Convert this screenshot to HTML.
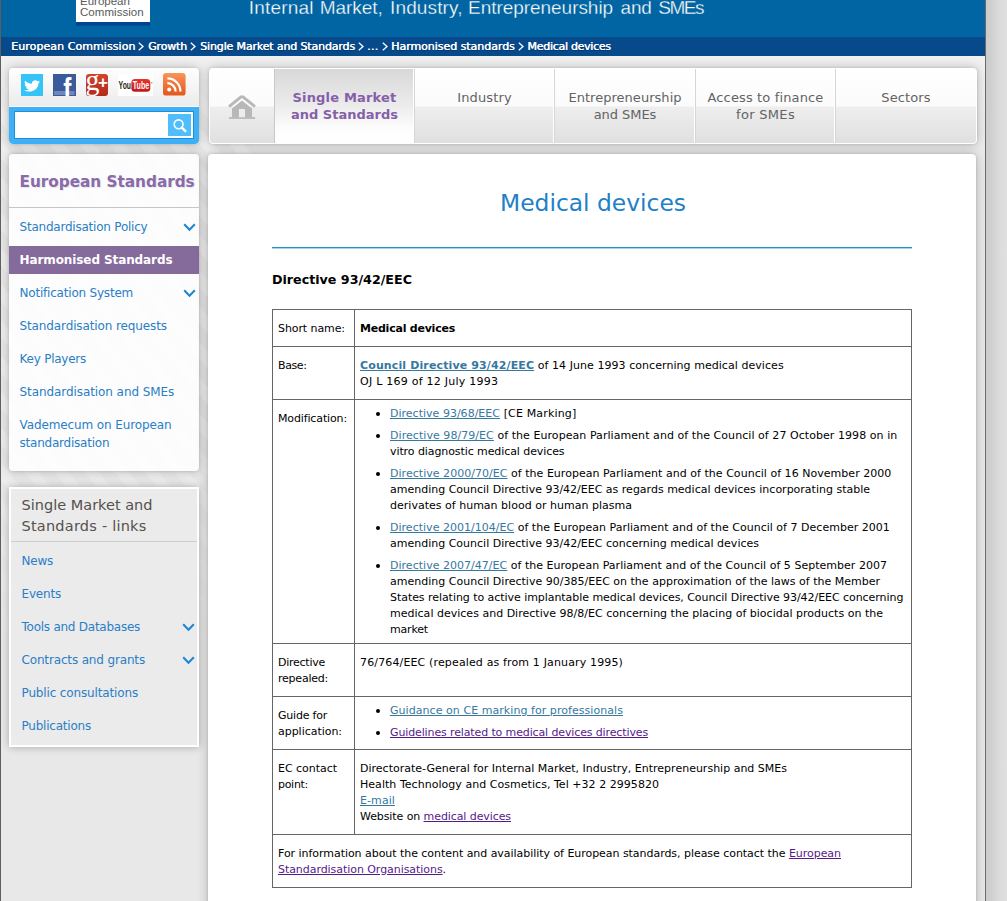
<!DOCTYPE html>
<html lang="en">
<head>
<meta charset="utf-8">
<title>Medical devices - European Commission</title>
<style>
*{box-sizing:border-box;margin:0;padding:0}
html,body{width:1007px;height:901px;overflow:hidden}
body{font-family:"DejaVu Sans","Liberation Sans",sans-serif;font-size:11px;line-height:16px;color:#000;background:#e0e0e0;position:relative}
a{color:#36789f;text-decoration:underline}
a.v{color:#551a8b}
.ln{white-space:nowrap}
.abs,.abs>*{position:absolute}
#gutter{position:absolute;left:986px;top:0;width:21px;height:901px;background:linear-gradient(90deg,#cbcbcb 0,#cecece 4px,#dbdbdb 13px,#e0e0e0 21px)}
#page{position:absolute;left:0;top:0;width:986px;height:901px;background:#e8e8e8;overflow:hidden}
#edgeL{position:absolute;left:0;top:0;width:1px;height:901px;background:#5e5e5e;z-index:9}
#edgeR{position:absolute;left:985px;top:0;width:1px;height:901px;background:#6a6a6a;z-index:9}
#topshade{position:absolute;left:0;top:56px;width:985px;height:120px;background:linear-gradient(#f1f1f1,rgba(241,241,241,0))}
#stripes{position:absolute;left:0;top:70px;width:260px;height:606px;
 background:repeating-linear-gradient(50deg,rgba(255,255,255,0) 0,rgba(255,255,255,0) 11px,rgba(255,255,255,.3) 12px,rgba(255,255,255,.3) 22px,rgba(255,255,255,0) 23px);
 -webkit-mask-image:linear-gradient(transparent 0,#000 6%,#000 55%,transparent 100%);mask-image:linear-gradient(transparent 0,#000 6%,#000 55%,transparent 100%)}
#hdr{position:absolute;left:0;top:0;width:985px;height:37px;background:#0065a2}
#logo{position:absolute;left:76px;top:0;width:74px;height:22px;background:#fff;box-shadow:0 3.7px 0 #004494;color:#58595b;font-family:"Liberation Sans",sans-serif;font-size:11.5px;line-height:11px;white-space:nowrap}
#logo>span{position:absolute;left:4px}
#sitename{position:absolute;left:248.5px;top:-5.5px;color:#fff;-webkit-text-stroke:.3px #0065a2;font-family:"Liberation Sans",sans-serif;font-size:19px;line-height:26px;white-space:nowrap}
#sitename>span{position:absolute;top:0}
#bc{position:absolute;left:0;top:37px;width:985px;height:19px;background:#074a8b;color:#fff;font-size:11px;line-height:19px;white-space:nowrap;text-shadow:.45px 0 0 #fff,0 1px 1px rgba(0,20,60,.45)}
#bc>span{position:absolute;top:0}
#bc svg{position:absolute;top:5px;width:6px;height:9px}
.box{position:absolute;background:#fff;border-radius:4px;box-shadow:0 0 3px rgba(0,0,0,.16),0 0 12px rgba(0,0,0,.22)}
#social{left:9px;top:68px;width:190px;height:76px;background:linear-gradient(#fefefe 0,#f8f8f8 14px,#efefef 30px,#ececec 38px);overflow:hidden}
#social svg{position:absolute}
#sbar{position:absolute;left:0;top:39px;width:190px;height:37px;background:#3eb1f6;box-shadow:0 -1px 0 #fff;border-radius:0 0 4px 4px}
#sinp{position:absolute;left:5px;top:4px;width:180px;height:28px;background:#fff;border:1px solid #1d8fde}
#sbtn{position:absolute;left:159px;top:7px;width:23px;height:22px;background:#50bdfc}
#nav{left:209px;top:68px;width:768px;height:76px;border:1px solid #fff;background:linear-gradient(#fff 0,#fbfbfb 37px,#eeeeee 38px,#e0e0e0 100%);overflow:hidden}
.tab{position:absolute;top:0;height:74px;text-align:center;font-size:13px;line-height:17px;color:#636363;padding-top:20px;border-left:1px solid #d6d6d6;box-shadow:-1px 0 0 #fff}
.tab.act{background:linear-gradient(#d8d8d8 0,#ececec 37px,#fdfdfd 60px,#fff 74px);color:#8560a8;font-weight:bold;border-left:1px solid #c8c8c8;box-shadow:none}
#main{left:208px;top:154px;width:768px;height:800px}
h1{position:absolute;left:1px;width:768px;top:31px;text-align:center;font-weight:normal;color:#2180c8;font-size:23.4px;line-height:36px}
#hr{position:absolute;left:64px;top:93px;width:640px;height:1px;background:#2a8bd5;box-shadow:0 1px 0 #a9d0ee}
h2{position:absolute;left:64px;top:117px;font-size:12.7px;line-height:18px;font-weight:bold;white-space:nowrap}
table{position:absolute;left:64px;top:155px;width:640px;border-collapse:collapse;font-size:11px;line-height:16px}
td{border:1px solid #666;vertical-align:top;padding:11px 5px 9px 5px}
td.l{width:82px}
td ul{list-style:none;margin:-5px 0 -10px 30px}
td li{position:relative;margin-bottom:6px}
td li:before{content:"";position:absolute;left:-14px;top:6px;width:4px;height:4px;border-radius:2px;background:#000}
.side{left:9px;width:190px}
#s1{top:154px;height:317px;background:rgba(255,255,255,.86)}
#s1 h3{position:absolute;left:10.5px;top:16px;font-size:15.3px;line-height:24px;color:#8a6aa7;font-weight:bold;white-space:nowrap;text-shadow:1px 1px 0 rgba(200,205,225,.45)}
#s1 .sep{position:absolute;left:0;top:53px;width:190px;height:1px;background:#c6c6c6}
.mi{position:absolute;left:10.5px;font-size:12px;line-height:18px;color:#2a7ec6;white-space:nowrap}
.mi.cur{left:0;width:190px;height:28px;background:#856a9c;color:#fff;font-weight:bold;padding:5px 0 0 10.5px}
.chev{position:absolute;width:13px;height:9px}
#s2{top:487px;height:260px;background:#ebebeb;border:2px solid #fff;border-radius:0;box-shadow:0 0 8px rgba(0,0,0,.28)}
#s2 h3{position:absolute;left:10.5px;top:6px;font-size:14.5px;line-height:21px;font-weight:normal;color:#55504d;white-space:nowrap}
#s2 .sep{position:absolute;left:0;top:52px;width:186px;height:1px;background:#cdcdcd}
#s2 .mi{left:10.5px}
</style>
</head>
<body>
<div id="gutter"></div>
<div id="page">
<div id="topshade"></div>
<div id="stripes"></div>
<div id="hdr">
 <div id="logo"><span style="top:-4.5px">European</span><span style="top:6.5px"><span class="ln" style="letter-spacing:0.043px">Commission</span></span></div>
 <div id="sitename"><span style="left:0.2px"><span class="ln" style="letter-spacing:0.203px">Internal</span></span> <span style="left:71.2px"><span class="ln" style="letter-spacing:-0.051px">Market,</span></span> <span style="left:141.6px"><span class="ln" style="letter-spacing:0.115px">Industry,</span></span> <span style="left:219.6px"><span class="ln" style="letter-spacing:-0.048px">Entrepreneurship</span></span> <span style="left:372.1px"><span class="ln" style="letter-spacing:-0.234px">and</span></span> <span style="left:409.8px"><span class="ln" style="letter-spacing:-1.472px">SMEs</span></span></div>
</div>
<div id="bc">
 <span style="left:11px"><span class="ln" style="letter-spacing:0.068px">European Commission</span></span>
 <svg style="left:138px" viewBox="0 0 6 9"><path d="M.8.8 5 4.5.8 8.2" fill="none" stroke="#fff" stroke-width="1.3"/></svg>
 <span style="left:148px"><span class="ln" style="letter-spacing:-0.171px">Growth</span></span>
 <svg style="left:190px" viewBox="0 0 6 9"><path d="M.8.8 5 4.5.8 8.2" fill="none" stroke="#fff" stroke-width="1.3"/></svg>
 <span style="left:200px"><span class="ln" style="letter-spacing:-0.141px">Single Market and Standards</span></span>
 <svg style="left:357.5px" viewBox="0 0 6 9"><path d="M.8.8 5 4.5.8 8.2" fill="none" stroke="#fff" stroke-width="1.3"/></svg>
 <span style="left:367px"><span class="ln" style="letter-spacing:0.300px">...</span></span>
 <svg style="left:381.5px" viewBox="0 0 6 9"><path d="M.8.8 5 4.5.8 8.2" fill="none" stroke="#fff" stroke-width="1.3"/></svg>
 <span style="left:391px"><span class="ln" style="letter-spacing:-0.036px">Harmonised standards</span></span>
 <svg style="left:517.5px" viewBox="0 0 6 9"><path d="M.8.8 5 4.5.8 8.2" fill="none" stroke="#fff" stroke-width="1.3"/></svg>
 <span style="left:527.3px"><span class="ln" style="letter-spacing:-0.281px">Medical devices</span></span>
</div>

<div id="social" class="box">
 <!--ICONS-START--><svg style="left:12px;top:6px" width="22" height="22" viewBox="0 0 22 22"><rect width="22" height="22" fill="#35c4f8"/><path transform="translate(3,5) scale(0.67,0.58)" fill="#fff" d="M23.953 4.57a10 10 0 01-2.825.775 4.958 4.958 0 002.163-2.723c-.951.555-2.005.959-3.127 1.184a4.92 4.92 0 00-8.384 4.482C7.69 8.095 4.067 6.13 1.64 3.162a4.822 4.822 0 00-.666 2.475c0 1.71.87 3.213 2.188 4.096a4.904 4.904 0 01-2.228-.616v.06a4.923 4.923 0 003.946 4.827 4.996 4.996 0 01-2.212.085 4.936 4.936 0 004.604 3.417 9.867 9.867 0 01-6.102 2.105c-.39 0-.779-.023-1.17-.067a13.995 13.995 0 007.557 2.209c9.053 0 13.998-7.496 13.998-13.985 0-.21 0-.42-.015-.63A9.935 9.935 0 0024 4.59z"/></svg>
 <svg style="left:44px;top:6px" width="23" height="22" viewBox="0 0 23 22"><rect width="23" height="22" fill="#3b5a9a"/><rect x="1" y="17" width="20.5" height="4" fill="#6f86b7"/><text transform="translate(10.2,25.2) scale(.84,1)" font-family="Liberation Sans,sans-serif" font-weight="bold" font-size="29" fill="#fff">f</text></svg>
 <svg style="left:77px;top:6px" width="22" height="22" viewBox="0 0 22 22"><defs><linearGradient id="gp" x1="0" y1="0" x2="0" y2="1"><stop offset="0" stop-color="#d3432f"/><stop offset="1" stop-color="#b3291c"/></linearGradient></defs><rect width="22" height="22" rx="3" fill="url(#gp)"/><text transform="translate(-0.5,16.4) scale(1.16,1.22)" font-family="Liberation Serif,serif" font-size="24" fill="#fff">g</text><text x="11.9" y="13.6" font-family="Liberation Sans,sans-serif" font-weight="bold" font-size="17" fill="#fff">+</text></svg>
 <svg style="left:109px;top:6px" width="35" height="22" viewBox="0 0 35 22"><defs><linearGradient id="yt" x1="0" y1="0" x2="0" y2="1"><stop offset="0" stop-color="#e8352b"/><stop offset="1" stop-color="#c3151a"/></linearGradient></defs><rect width="35" height="22" fill="#fff"/><rect x="13.4" y="5" width="18.9" height="12.8" rx="3.6" fill="url(#yt)"/><text x="0.6" y="15.2" font-family="Liberation Sans,sans-serif" font-weight="bold" font-size="11" fill="#222" textLength="12.4" lengthAdjust="spacingAndGlyphs">You</text><text x="14.8" y="15.2" font-family="Liberation Sans,sans-serif" font-weight="bold" font-size="11" fill="#fff" textLength="16.4" lengthAdjust="spacingAndGlyphs">Tube</text><rect x="33.1" y="8.4" width="1.3" height=".9" fill="#666"/></svg>
 <svg style="left:154px;top:5px" width="23" height="23" viewBox="0 0 23 23"><defs><linearGradient id="rs" x1="0" y1="0" x2="0" y2="1"><stop offset="0" stop-color="#f8955a"/><stop offset="1" stop-color="#e2571b"/></linearGradient></defs><rect width="22.6" height="22.6" rx="3.2" fill="url(#rs)"/><circle cx="6.2" cy="16.4" r="2" fill="#fff"/><path d="M4.4 10.2a8.2 8.2 0 0 1 8.2 8.2" fill="none" stroke="#fff" stroke-width="2.2"/><path d="M4.4 5.4a13 13 0 0 1 13 13" fill="none" stroke="#fff" stroke-width="2.2"/></svg>
<!--ICONS-END-->
 <div id="sbar"><div id="sinp"></div><div id="sbtn"><svg style="left:4px;top:4px" width="16" height="16" viewBox="0 0 16 16"><circle cx="6.6" cy="6.3" r="4.4" fill="none" stroke="#fff" stroke-width="1.6"/><path d="M9.8 9.6 13.4 13.2" stroke="#fff" stroke-width="2.4" stroke-linecap="round"/></svg></div></div>
</div>

<div id="nav" class="box">
 <div class="tab" style="left:0;width:64px;border-left:0;box-shadow:none"><svg style="position:absolute;left:17px;top:25px" width="30" height="26" viewBox="0 0 30 26"><path d="M15 2.2 2 12.6" stroke="#b8b8b8" stroke-width="3" fill="none"/><path d="M15 2.2 28 12.6" stroke="#b8b8b8" stroke-width="3" fill="none"/><path d="M15 6.6 25 14.4V23.2H5V14.4Z" fill="#b8b8b8"/><rect x="2" y="23.1" width="26" height="1.8" fill="#b8b8b8"/><rect x="11.9" y="15" width="6.1" height="8.2" fill="#ededed"/></svg></div>
 <div class="tab act" style="left:64px;width:140px"><span class="ln" style="letter-spacing:0.181px">Single Market</span><br><span class="ln" style="letter-spacing:0.000px">and Standards</span></div>
 <div class="tab" style="left:204px;width:140px"><span class="ln" style="letter-spacing:0.127px">Industry</span></div>
 <div class="tab" style="left:344px;width:141px"><span class="ln" style="letter-spacing:0.036px">Entrepreneurship</span><br><span class="ln" style="letter-spacing:-0.056px">and SMEs</span></div>
 <div class="tab" style="left:485px;width:140px"><span class="ln" style="letter-spacing:0.141px">Access to finance</span><br><span class="ln" style="letter-spacing:0.316px">for SMEs</span></div>
 <div class="tab" style="left:625px;width:141px"><span class="ln" style="letter-spacing:0.132px">Sectors</span></div>
</div>

<div id="s1" class="box side">
 <h3><span class="ln" style="letter-spacing:-0.026px">European Standards</span></h3>
 <div class="sep"></div>
 <div class="mi" style="top:64px"><span class="ln" style="letter-spacing:-0.221px">Standardisation Policy</span></div>
 <svg class="chev" style="left:174px;top:69px" viewBox="0 0 13 9"><path d="M1.2 1.2 6.5 6.8 11.8 1.2" fill="none" stroke="#1c86d1" stroke-width="2"/></svg>
 <div class="mi cur" style="top:92px"><span class="ln" style="letter-spacing:-0.094px">Harmonised Standards</span></div>
 <div class="mi" style="top:130px"><span class="ln" style="letter-spacing:-0.201px">Notification System</span></div>
 <svg class="chev" style="left:174px;top:135px" viewBox="0 0 13 9"><path d="M1.2 1.2 6.5 6.8 11.8 1.2" fill="none" stroke="#1c86d1" stroke-width="2"/></svg>
 <div class="mi" style="top:163px"><span class="ln" style="letter-spacing:-0.117px">Standardisation requests</span></div>
 <div class="mi" style="top:196px"><span class="ln" style="letter-spacing:-0.234px">Key Players</span></div>
 <div class="mi" style="top:229px"><span class="ln" style="letter-spacing:-0.076px">Standardisation and SMEs</span></div>
 <div class="mi" style="top:262px"><span class="ln" style="letter-spacing:-0.112px">Vademecum on European</span><br><span class="ln" style="letter-spacing:-0.224px">standardisation</span></div>
</div>

<div id="s2" class="box side">
 <h3><span class="ln" style="letter-spacing:0.005px">Single Market and</span><br><span class="ln" style="letter-spacing:0.225px">Standards - links</span></h3>
 <div class="sep"></div>
 <div class="mi" style="top:63px"><span class="ln" style="letter-spacing:-0.209px">News</span></div>
 <div class="mi" style="top:96px"><span class="ln" style="letter-spacing:-0.190px">Events</span></div>
 <div class="mi" style="top:129px"><span class="ln" style="letter-spacing:-0.246px">Tools and Databases</span></div>
 <svg class="chev" style="left:170.6px;top:134px" viewBox="0 0 13 9"><path d="M1.2 1.2 6.5 6.8 11.8 1.2" fill="none" stroke="#1c86d1" stroke-width="2"/></svg>
 <div class="mi" style="top:162px"><span class="ln" style="letter-spacing:-0.152px">Contracts and grants</span></div>
 <svg class="chev" style="left:170.6px;top:167px" viewBox="0 0 13 9"><path d="M1.2 1.2 6.5 6.8 11.8 1.2" fill="none" stroke="#1c86d1" stroke-width="2"/></svg>
 <div class="mi" style="top:195px"><span class="ln" style="letter-spacing:-0.139px">Public consultations</span></div>
 <div class="mi" style="top:228px"><span class="ln" style="letter-spacing:-0.217px">Publications</span></div>
</div>

<div id="main" class="box">
 <h1><span class="ln" style="letter-spacing:-0.005px">Medical devices</span></h1>
 <div id="hr"></div>
 <h2><span class="ln" style="letter-spacing:-0.011px">Directive 93/42/EEC</span></h2>
 <table>
  <tr><td class="l"><span class="ln" style="letter-spacing:-0.084px">Short name:</span></td><td><b><span class="ln" style="letter-spacing:-0.227px">Medical devices</span></b></td></tr>
  <tr><td class="l"><span class="ln" style="letter-spacing:-0.400px">Base:</span></td><td><span class="ln" style="letter-spacing:0.128px"><a href="#"><b>Council Directive 93/42/EEC</b></a></span><span class="ln" style="letter-spacing:0.055px"> of 14 June 1993 concerning medical devices</span><br><span class="ln" style="letter-spacing:0.246px">OJ L 169 of 12 July 1993</span></td></tr>
  <tr><td class="l"><span class="ln" style="letter-spacing:-0.136px">Modification:</span></td><td>
   <ul>
    <li><span class="ln" style="letter-spacing:0.012px"><a href="#">Directive 93/68/EEC</a></span><span class="ln" style="letter-spacing:0.158px"> [CE Marking]</span></li>
    <li><span class="ln" style="letter-spacing:0.059px"><a href="#">Directive 98/79/EC</a> of the European Parliament and of the Council of 27 October 1998 on in</span><br><span class="ln" style="letter-spacing:-0.085px">vitro diagnostic medical devices</span></li>
    <li><span class="ln" style="letter-spacing:0.033px"><a href="#">Directive 2000/70/EC</a> of the European Parliament and of the Council of 16 November 2000</span><br><span class="ln" style="letter-spacing:-0.002px">amending Council Directive 93/42/EEC as regards medical devices incorporating stable</span><br><span class="ln" style="letter-spacing:0.014px">derivates of human blood or human plasma</span></li>
    <li><span class="ln" style="letter-spacing:0.017px"><a href="#">Directive 2001/104/EC</a> of the European Parliament and of the Council of 7 December 2001</span><br><span class="ln" style="letter-spacing:-0.001px">amending Council Directive 93/42/EEC concerning medical devices</span></li>
    <li><span class="ln" style="letter-spacing:0.022px"><a href="#">Directive 2007/47/EC</a> of the European Parliament and of the Council of 5 September 2007</span><br><span class="ln" style="letter-spacing:0.010px">amending Council Directive 90/385/EEC on the approximation of the laws of the Member</span><br><span class="ln" style="letter-spacing:-0.052px">States relating to active implantable medical devices, Council Directive 93/42/EEC concerning</span><br><span class="ln" style="letter-spacing:0.011px">medical devices and Directive 98/8/EC concerning the placing of biocidal products on the</span><br><span class="ln" style="letter-spacing:-0.174px">market</span></li>
   </ul></td></tr>
  <tr><td class="l"><span class="ln" style="letter-spacing:-0.253px">Directive</span><br><span class="ln" style="letter-spacing:-0.229px">repealed:</span></td><td><span class="ln" style="letter-spacing:0.144px">76/764/EEC (repealed as from 1 January 1995)</span></td></tr>
  <tr><td class="l"><span class="ln" style="letter-spacing:-0.215px">Guide for</span><br><span class="ln" style="letter-spacing:-0.033px">application:</span></td><td>
   <ul>
    <li><span class="ln" style="letter-spacing:0.056px"><a href="#">Guidance on CE marking for professionals</a></span></li>
    <li><span class="ln" style="letter-spacing:-0.126px"><a href="#" class="v">Guidelines related to medical devices directives</a></span></li>
   </ul></td></tr>
  <tr><td class="l"><span class="ln" style="letter-spacing:-0.030px">EC contact</span><br><span class="ln" style="letter-spacing:-0.294px">point:</span></td><td><span class="ln" style="letter-spacing:0.001px">Directorate-General for Internal Market, Industry, Entrepreneurship and SMEs</span><br><span class="ln" style="letter-spacing:0.039px">Health Technology and Cosmetics, Tel +32 2 2995820</span><br><span class="ln" style="letter-spacing:0.083px"><a href="#">E-mail</a></span><br><span class="ln" style="letter-spacing:-0.088px">Website on <a href="#" class="v">medical devices</a></span></td></tr>
  <tr><td colspan="2"><span class="ln" style="letter-spacing:-0.042px">For information about the content and availability of European standards, please contact the <a href="#" class="v">European</a></span><br><span class="ln" style="letter-spacing:-0.055px"><a href="#" class="v">Standardisation Organisations</a>.</span></td></tr>
 </table>
</div>
<div id="edgeL"></div><div id="edgeR"></div>
</div>
</body>
</html>
